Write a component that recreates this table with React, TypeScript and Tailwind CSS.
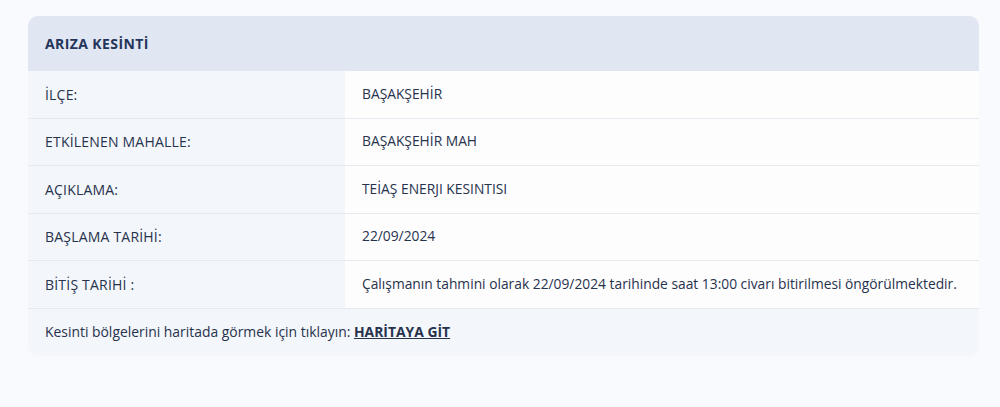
import React from "react";

const rows: [string, string][] = [
  ["İLÇE:", "BAŞAKŞEHİR"],
  ["ETKİLENEN MAHALLE:", "BAŞAKŞEHİR MAH"],
  ["AÇIKLAMA:", "TEİAŞ ENERJI KESINTISI"],
  ["BAŞLAMA TARİHİ:", "22/09/2024"],
  ["BİTİŞ TARİHİ :", "Çalışmanın tahmini olarak 22/09/2024 tarihinde saat 13:00 civarı bitirilmesi öngörülmektedir."],
];

export default function App() {
  return (
    <div
      className="w-[1000px] h-[407px] bg-[#f9fafd] pt-[16px] pl-[28px] text-[#27324d]"
      style={{ fontFamily: "'Open Sans', 'Noto Sans', sans-serif" }}
    >
      <div className="w-[951px] rounded-[10px] overflow-hidden bg-[#f3f6fa]">
        <div className="h-[55px] bg-[#e0e6f2] flex items-center pl-[17px] text-[14px] tracking-[0.4px] font-bold text-[#24345a]">
          ARIZA KESİNTİ
        </div>
        {rows.map(([k, v]) => (
          <div key={k} className="flex h-[47.5px] border-b border-[#e6eaf0] text-[14px]">
            <div className="w-[317px] bg-[#f3f6fa] flex items-center pl-[17px] tracking-[0.2px]">{k}</div>
            <div className="flex-1 bg-[#fdfdfe] flex items-center pl-[17px] text-[13.8px]">{v}</div>
          </div>
        ))}
        <div className="h-[47px] flex items-center pl-[17px] text-[13.9px] bg-[#f3f6fa]">
          <span>Kesinti bölgelerini haritada görmek için tıklayın:&nbsp;</span>
          <a className="font-bold underline text-[#27324d]">HARİTAYA GİT</a>
        </div>
      </div>
    </div>
  );
}
